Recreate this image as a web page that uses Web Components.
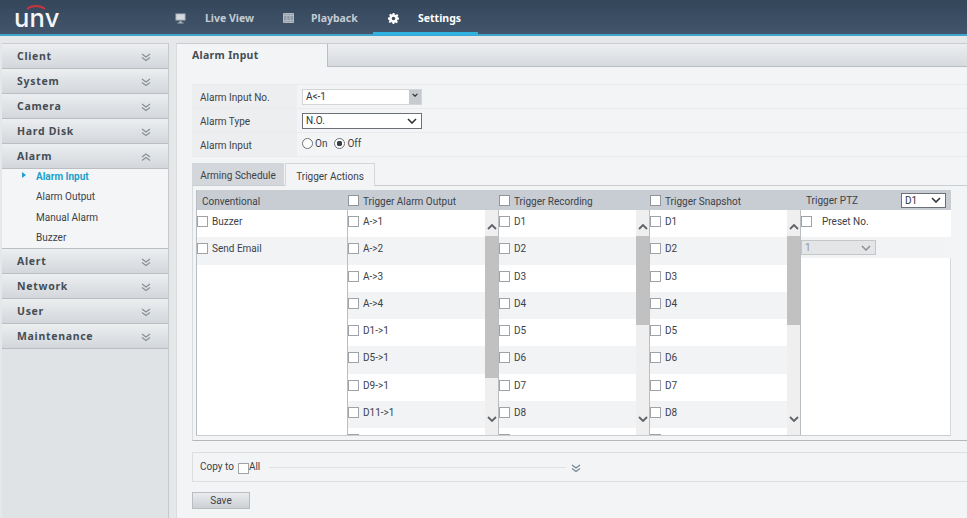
<!DOCTYPE html>
<html lang="en">
<head>
<meta charset="utf-8">
<title>Alarm Input</title>
<style>
  html, body { margin: 0; height: 100%; overflow: hidden; }
  body {
    background: #e5e7e9;
    color: #3c4249;
    font: 10px Roboto, "Noto Sans", "Liberation Sans", sans-serif;
  }
  #app { display: flex; flex-direction: column; height: 518px; }
  #columns { flex: 1; display: flex; gap: 7px; padding: 7px 0 0 2px; min-height: 0; }
</style>
</head>
<body>
<div id="app">
  <app-header></app-header>
  <div id="columns">
    <side-menu>
      <menu-group label="Client"></menu-group>
      <menu-group label="System"></menu-group>
      <menu-group label="Camera"></menu-group>
      <menu-group label="Hard Disk"></menu-group>
      <menu-group label="Alarm" open>
        <menu-link active>Alarm Input</menu-link>
        <menu-link>Alarm Output</menu-link>
        <menu-link>Manual Alarm</menu-link>
        <menu-link>Buzzer</menu-link>
      </menu-group>
      <menu-group label="Alert"></menu-group>
      <menu-group label="Network"></menu-group>
      <menu-group label="User"></menu-group>
      <menu-group label="Maintenance"></menu-group>
    </side-menu>
    <alarm-page></alarm-page>
  </div>
</div>

<script>
const chevrons = (dir = 'down', color = '#868e96') => {
  const d = dir === 'down'
    ? 'M1 1l4 3 4-3M1 4.5l4 3 4-3'
    : 'M1 4l4-3 4 3M1 7.5l4-3 4 3';
  return `<svg width="10" height="9" viewBox="0 0 10 9" fill="none" stroke="${color}" stroke-width="1.1"><path d="${d}"/></svg>`;
};

class AppHeader extends HTMLElement {
  connectedCallback() {
    this.attachShadow({ mode: 'open' });
    this.shadowRoot.innerHTML = `
      <style>
        :host {
          display: flex;
          flex: none;
          height: 34px;
          background: linear-gradient(#34465a, #42556b);
          border-bottom: 2px solid #3fa7cf;
          color: #c4ccd3;
          font: bold 10.5px "Noto Sans", "Liberation Sans", sans-serif;
        }
        .logo {
          position: relative;
          width: 175px;
          padding: 2px 0 0 14px;
          box-sizing: border-box;
          color: #f3f5f7;
          font: 500 25.5px/32px Inter, sans-serif;
          letter-spacing: .2px;
        }
        .logo svg { position: absolute; left: 25px; top: 3px; }
        nav { display: flex; height: 36px; }
        a {
          display: flex;
          align-items: center;
          height: 34px;
          box-sizing: border-box;
          padding-top: 2px;
          gap: 19px;
        }
        a svg { display: block; flex: none; }
        .live { width: 108px; }
        .play { width: 90px; gap: 17px; }
        .set {
          width: 105px;
          gap: 19px;
          padding-left: 15px;
          color: #fff;
          position: relative;
        }
        .set::after {
          content: "";
          position: absolute;
          left: 0; right: 0; bottom: -1px;
          height: 3px;
          background: #2fb3e0;
        }
      </style>
      <div class="logo">unv<svg width="22" height="7" viewBox="0 0 22 7" fill="none"><path d="M2 6c5-4 13-4 18 0" stroke="#c9343c" stroke-width="1.8"/></svg></div>
      <nav>
        <a class="live">
          <svg width="11" height="11" viewBox="0 0 11 11"><path d="M0.5 0.5h10v7h-10z" fill="#aeb6be"/><path d="M1.5 1.5h8v5h-8z" fill="#d5dade"/><path d="M4.5 8h2v1.5h2v1h-6v-1h2z" fill="#aeb6be"/></svg>
          <span>Live View</span>
        </a>
        <a class="play">
          <svg width="11" height="10" viewBox="0 0 11 10" fill="#8f9aa5" stroke="#b3bbc3"><path d="M.5 .5h10v9H.5z"/><path d="M.5 2.5h10M.5 7.5h10M3.8 .5v9M7.2 .5v9" fill="none"/></svg>
          <span>Playback</span>
        </a>
        <a class="set">
          <svg width="11" height="11" viewBox="0 0 12 12"><path fill="#fff" fill-rule="evenodd" d="M5 0h2l.3 1.6 1.2.5L9.9 1.2l1.4 1.4-.9 1.4.5 1.2L12 5v2l-1.6.3-.5 1.2.9 1.4-1.4 1.4-1.4-.9-1.2.5L7 12H5l-.3-1.6-1.2-.5-1.4.9L.7 9.9l.9-1.4-.5-1.2L0 7V5l1.6-.3.5-1.2-.9-1.4L2.6.7l1.4.9 1.2-.5zM6 4a2 2 0 1 0 0 4 2 2 0 0 0 0-4z"/></svg>
          <span>Settings</span>
        </a>
      </nav>`;
  }
}

class SideMenu extends HTMLElement {
  connectedCallback() {
    this.attachShadow({ mode: 'open' });
    this.shadowRoot.innerHTML = `
      <style>
        :host {
          display: block;
          flex: none;
          width: 166px;
          background: #e0e3e6;
          border-top: 1px solid #c9cdd1;
          border-right: 1px solid #c4c8cc;
        }
      </style>
      <slot></slot>`;
  }
}

class MenuGroup extends HTMLElement {
  connectedCallback() {
    const open = this.hasAttribute('open');
    this.attachShadow({ mode: 'open' });
    this.shadowRoot.innerHTML = `
      <style>
        :host { display: block; }
        .head {
          display: flex;
          align-items: center;
          justify-content: space-between;
          height: 24px;
          padding: 0 17px 0 15px;
          background: linear-gradient(#eceef0, #d3d7db);
          border-bottom: 1px solid #b9bec3;
          color: #454d55;
          font: bold 10.5px "Noto Sans", "Liberation Sans", sans-serif;
          letter-spacing: .7px;
        }
        .head svg { margin-top: 3px; }
        .items { display: ${open ? 'block' : 'none'}; background: #f3f5f7; border-bottom: 1px solid #b9bec3; height: 79px; }
      </style>
      <div class="head"><span>${this.getAttribute('label')}</span>${chevrons(open ? 'up' : 'down')}</div>
      <div class="items"><slot></slot></div>`;
  }
}

class MenuLink extends HTMLElement {
  connectedCallback() {
    const active = this.hasAttribute('active');
    this.attachShadow({ mode: 'open' });
    this.shadowRoot.innerHTML = `
      <style>
        :host {
          display: block;
          height: 20.4px;
          box-sizing: border-box;
          padding: 1px 0 0 34px;
          line-height: 14px;
          position: relative;
          color: ${active ? '#1e9fcb' : '#3c4249'};
          font-weight: ${active ? 'bold' : 'normal'};
        }
        i {
          position: absolute; left: 20px; top: 3px;
          border-left: 4px solid #1e9fcb;
          border-top: 3px solid transparent;
          border-bottom: 3px solid transparent;
        }
      </style>
      ${active ? '<i></i>' : ''}<slot></slot>`;
  }
}

class FormRow extends HTMLElement {
  connectedCallback() {
    this.attachShadow({ mode: 'open' });
    this.shadowRoot.innerHTML = `
      <style>
        :host {
          display: grid;
          grid-template-columns: 105px 1fr;
          height: 24px;
          border-bottom: 1px solid #e9ebed;
          box-sizing: border-box;
        }
        .label { background: #eceef0; padding: 1px 0 0 8px; display: flex; align-items: center; }
        .value { padding-left: 5px; display: flex; align-items: center; }
      </style>
      <div class="label">${this.getAttribute('label')}</div>
      <div class="value"><slot></slot></div>`;
  }
}

class SelectBox extends HTMLElement {
  connectedCallback() {
    const kind = this.getAttribute('kind') || 'plain';
    const w = this.getAttribute('width') || '120';
    const h = this.getAttribute('height') || '16';
    this.attachShadow({ mode: 'open' });
    const arrow = kind === 'disabled' ? '#8d9399' : '#2e3338';
    this.shadowRoot.innerHTML = `
      <style>
        :host {
          display: flex;
          align-items: center;
          justify-content: space-between;
          box-sizing: border-box;
          width: ${w}px;
          height: ${h}px;
          padding: 0 ${kind === 'combo' ? 0 : 4}px 0 3px;
          background: ${kind === 'disabled' ? '#e4e5e6' : '#fff'};
          border: 1px solid ${kind === 'disabled' ? '#c4c7ca' : kind === 'combo' ? '#d3d6d9' : '#6c7177'};
          color: ${kind === 'disabled' ? '#8d9399' : '#2f343a'};
        }
        .btn { display: flex; align-items: center; justify-content: center; }
        .combo { width: 12px; height: 14px; background: #c7cbcf; align-items: flex-start; padding-top: 3px; box-sizing: border-box; }
      </style>
      <span><slot></slot></span>
      <span class="btn ${kind === 'combo' ? 'combo' : ''}">
        <svg width="${kind === 'combo' ? 6 : 10}" height="${kind === 'combo' ? 4 : 6}" viewBox="0 0 10 6" fill="none" stroke="${arrow}" stroke-width="${kind === 'combo' ? 2 : 1.6}"><path d="M1 1l4 4 4-4"/></svg>
      </span>`;
  }
}

class RadioDot extends HTMLElement {
  connectedCallback() {
    const on = this.hasAttribute('checked');
    this.attachShadow({ mode: 'open' });
    this.shadowRoot.innerHTML = `
      <style>
        :host { display: inline-flex; align-items: center; gap: 2px; margin: 0 7px 2px 0; }
        i {
          width: 9px; height: 9px; border: 1px solid #6c7177; border-radius: 50%;
          background: ${on ? 'radial-gradient(circle, #3a3f45 0 2.6px, #fff 3px)' : '#fff'};
        }
      </style>
      <i></i><slot></slot>`;
  }
}

class CheckRow extends HTMLElement {
  connectedCallback() {
    this.attachShadow({ mode: 'open' });
    this.shadowRoot.innerHTML = `
      <style>
        :host {
          display: flex;
          align-items: flex-start;
          flex: none;
          height: 27.3px;
          padding-top: 6px;
          box-sizing: border-box;
          gap: 4px;
          background: #fff;
        }
        :host(:nth-child(even)) { background: #f1f3f5; }
        :host([gap]) { gap: 10px; }
        i { flex: none; width: 9px; height: 9px; border: 1px solid #9ea3a8; background: #fff; }
        span { margin-top: -1px; line-height: 14px; }
      </style>
      <i></i><span><slot></slot></span>`;
  }
}

class CheckList extends HTMLElement {
  connectedCallback() {
    const thumb = this.getAttribute('thumb');
    const items = this.getAttribute('items').split(',');
    this.attachShadow({ mode: 'open' });
    this.shadowRoot.innerHTML = `
      <style>
        :host { display: flex; min-height: 0; height: 100%; border-left: 1px solid #b9bec3; box-sizing: border-box; overflow: hidden; }
        .rows { flex: 1; display: flex; flex-direction: column; overflow: hidden; }
        .bar {
          flex: none;
          width: 13px;
          background: #efefef;
          display: flex;
          flex-direction: column;
          align-items: center;
        }
        .btn { height: 26px; flex: none; display: flex; align-items: flex-end; padding-bottom: 6px; box-sizing: border-box; }
        .track { flex: 1; width: 100%; }
        .thumb { width: 100%; background: #c1c1c1; height: ${thumb}px; }
        .down { height: 30px; align-items: flex-start; padding: 11px 0 0; }
      </style>
      <div class="rows">${items.map(t => `<check-row>${t}</check-row>`).join('')}<check-row></check-row></div>
      <div class="bar">
        <div class="btn"><svg width="10" height="6" viewBox="0 0 10 6" fill="none" stroke="#5f6368" stroke-width="1.8"><path d="M1 5l4-4 4 4"/></svg></div>
        <div class="track"><div class="thumb"></div></div>
        <div class="btn down"><svg width="10" height="6" viewBox="0 0 10 6" fill="none" stroke="#5f6368" stroke-width="1.8"><path d="M1 1l4 4 4-4"/></svg></div>
      </div>`;
  }
}

class AlarmPage extends HTMLElement {
  connectedCallback() {
    const dRows = 'D1,D2,D3,D4,D5,D6,D7,D8';
    this.attachShadow({ mode: 'open' });
    this.shadowRoot.innerHTML = `
      <style>
        :host {
          display: flex;
          flex-direction: column;
          flex: 1;
          min-width: 0;
          background: #f3f4f6;
          border-top: 1px solid #c9cdd1;
          border-left: 1px solid #d9dcdf;
        }
        .title-bar { display: flex; height: 23px; flex: none; background: linear-gradient(#eceef0, #d6d9dd); }
        .title {
          width: 151px;
          background: #f3f4f6;
          border-right: 1px solid #b9bec3;
          padding: 4px 0 0 15px;
          box-sizing: border-box;
          font: bold 10.5px "Noto Sans", sans-serif;
          letter-spacing: .3px;
          color: #454d55;
        }
        .fill { flex: 1; border-bottom: 1px solid #b9bec3; }
        .body { padding-left: 15px; flex: 1; display: flex; flex-direction: column; }
        .form { margin-top: 17px; flex: none; border-top: 1px solid #e9ebed; }
        .radios { display: flex; }
        .tabs { display: flex; gap: 1px; height: 23px; margin-top: 6px; flex: none; box-shadow: inset 0 -1px #c9cdd2; }
        .tabs div { display: flex; align-items: center; justify-content: center; box-sizing: border-box; padding-top: 2px; }
        .t1 { width: 92px; background: #d3d6da; height: 22px; }
        .t2 { width: 90px; background: #f3f4f6; border: 1px solid #d3d6da; border-bottom: 0; height: 23px; }
        .panel {
          flex: none;
          padding: 4px 0 4px 3px;
          border-left: 1px solid #d8dbde;
          border-bottom: 1px solid #b4b8bc;
        }
        .table {
          width: 755px;
          height: 246px;
          background: #fff;
          border-right: 1px solid #d8dadd;
          border-bottom: 1px solid #c9ccd0;
          border-left: 1px solid #b9bec3;
          box-sizing: border-box;
          display: grid;
          grid-template-columns: 150px 151px 151px 151px 151px;
          grid-template-rows: 20px 225px;
        }
        .th { background: #c8cdd3; display: flex; align-items: center; gap: 4px; padding: 2px 0 0 1px; box-sizing: border-box; }
        .th i { width: 9px; height: 9px; border: 1px solid #8f959b; background: #fff; margin-top: -1px; }
        .th.plain { padding-left: 5px; }
        .th.ptz { padding-left: 6px; justify-content: space-between; padding-right: 5px; padding-top: 0; }
        .col0 { display: flex; flex-direction: column; overflow: hidden; }
        .col0 .grow { flex: 1; background: #fff; }
        .col4 { border-left: 1px solid #b9bec3; display: flex; flex-direction: column; }
        .col4 .row2 { height: 21px; background: #f1f3f5; padding-top: 3px; box-sizing: border-box; }
        .copy {
          display: flex;
          align-items: center;
          height: 30px;
          margin-top: 11px;
          flex: none;
          box-sizing: border-box;
          border: 1px solid #dcdfe2;
          border-right: 0;
          padding: 0 0 2px 7px;
        }
        .copy i { width: 9px; height: 9px; border: 1px solid #9ea3a8; background: #fff; margin: 5px 0 0 4px; }
        .copy .line { width: 297px; height: 1px; background: #dfe1e3; margin: 2px 5px 0 9px; }
        .copy svg { display: block; margin-top: 4px; }
        .save {
          width: 58px; height: 17px; margin-top: 10px; flex: none;
          display: flex; align-items: center; justify-content: center;
          box-sizing: border-box;
          background: linear-gradient(#e9ebed, #cdd1d5);
          border: 1px solid #b9bdc1;
        }
      </style>
      <div class="title-bar"><div class="title">Alarm Input</div><div class="fill"></div></div>
      <div class="body">
        <div class="form">
          <form-row label="Alarm Input No."><select-box kind="combo">A&lt;-1</select-box></form-row>
          <form-row label="Alarm Type"><select-box>N.O.</select-box></form-row>
          <form-row label="Alarm Input"><div class="radios"><radio-dot>On</radio-dot><radio-dot checked>Off</radio-dot></div></form-row>
        </div>
        <div class="tabs"><div class="t1">Arming Schedule</div><div class="t2">Trigger Actions</div></div>
        <div class="panel">
          <div class="table">
            <div class="th plain">Conventional</div>
            <div class="th"><i></i>Trigger Alarm Output</div>
            <div class="th"><i></i>Trigger Recording</div>
            <div class="th"><i></i>Trigger Snapshot</div>
            <div class="th ptz">Trigger PTZ<select-box width="45" height="15">D1</select-box></div>
            <div class="col0">
              <check-row>Buzzer</check-row>
              <check-row>Send Email</check-row>
              <div class="grow"></div>
            </div>
            <check-list thumb="142" items="A-&gt;1,A-&gt;2,A-&gt;3,A-&gt;4,D1-&gt;1,D5-&gt;1,D9-&gt;1,D11-&gt;1"></check-list>
            <check-list thumb="89" items="${dRows}"></check-list>
            <check-list thumb="89" items="${dRows}"></check-list>
            <div class="col4">
              <check-row gap>Preset No.</check-row>
              <div class="row2"><select-box kind="disabled" width="75" height="15">1</select-box></div>
            </div>
          </div>
        </div>
        <div class="copy">Copy to<i></i><span>All</span><span class="line"></span>${chevrons('down', '#6f8294')}</div>
        <div class="save">Save</div>
      </div>`;
  }
}

customElements.define('check-row', CheckRow);
customElements.define('check-list', CheckList);
customElements.define('select-box', SelectBox);
customElements.define('radio-dot', RadioDot);
customElements.define('form-row', FormRow);
customElements.define('menu-link', MenuLink);
customElements.define('menu-group', MenuGroup);
customElements.define('side-menu', SideMenu);
customElements.define('app-header', AppHeader);
customElements.define('alarm-page', AlarmPage);
</script>
</body>
</html>
